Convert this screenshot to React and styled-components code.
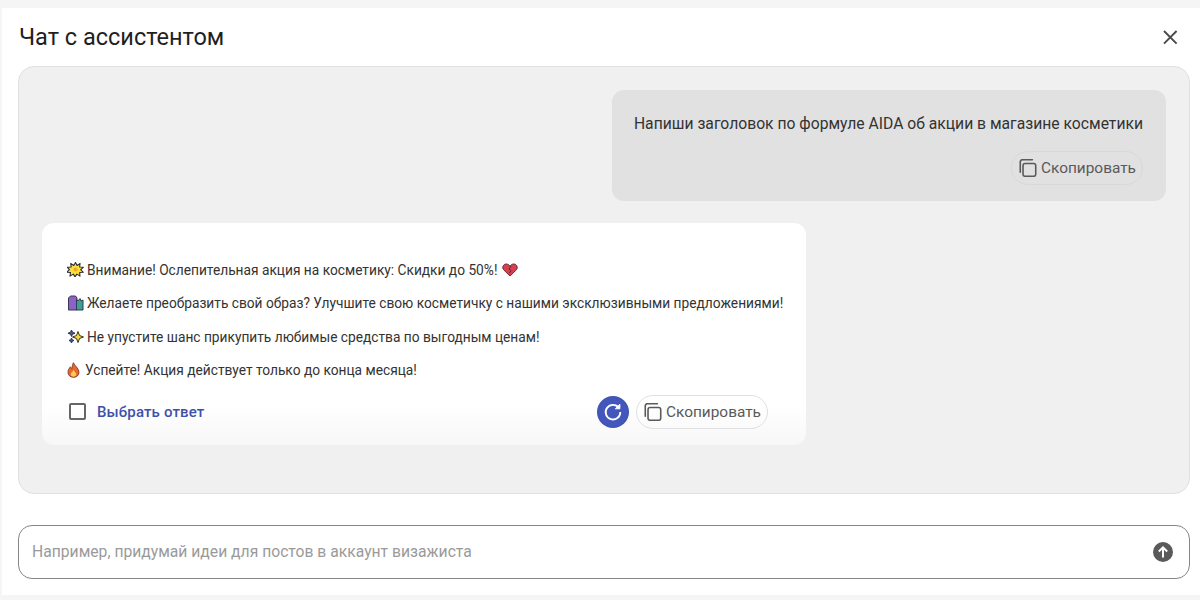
import React from 'react'
import styled, { createGlobalStyle } from 'styled-components'

const GlobalStyle = createGlobalStyle`
    html, body {
        margin: 0;
        padding: 0;
        background: #f5f5f5;
        font-family: Roboto, "Liberation Sans", sans-serif;
    }
`

const Page = styled.div`
    box-sizing: border-box;
    width: 1200px;
    height: 600px;
    padding: 8px 0 5px 2px;
    overflow: hidden;
`

const Dialog = styled.div`
    box-sizing: border-box;
    height: 100%;
    background: #fff;
    padding: 0 10px 16px 16px;
    display: flex;
    flex-direction: column;
`

const Header = styled.div`
    height: 58px;
    display: flex;
    align-items: center;
    justify-content: space-between;
    padding: 0 10px 0 1px;
`

const Title = styled.h2`
    margin: 0;
    font-size: 23.5px;
    font-weight: 400;
    color: #1f1f1f;
`

const CloseButton = styled.button`
    border: 0;
    padding: 0;
    background: none;
    display: flex;
    color: #4a4a4a;
`

const ChatArea = styled.div`
    box-sizing: border-box;
    height: 429px;
    background: #f0f0f0;
    border: 1px solid #e0e0e0;
    border-radius: 16px;
    padding: 23px 23px 0;
    display: flex;
    flex-direction: column;
    gap: 22px;
`

const UserBubble = styled.div`
    box-sizing: border-box;
    align-self: flex-end;
    width: 554px;
    height: 111px;
    padding: 23px 23px 0;
    background: #e1e1e1;
    border-radius: 12px;
    display: flex;
    flex-direction: column;
    align-items: flex-end;
    gap: 17px;
`

const UserText = styled.div`
    font-size: 15.7px;
    line-height: 21px;
    color: #333;
    white-space: nowrap;
`

const AnswerCard = styled.div`
    box-sizing: border-box;
    width: 764px;
    height: 222px;
    padding: 30px 23px 0 25px;
    background: linear-gradient(#fff 0, #fff 82%, #f7f7f7 100%);
    border-radius: 12px;
`

const AnswerLine = styled.div`
    height: 33.5px;
    display: flex;
    align-items: center;
    gap: ${p => p.$gap || 3}px;
    font-size: 13.74px;
    color: #333;
    white-space: nowrap;

    svg {
        flex-shrink: 0;
    }
`

const HeartMark = styled.span`
    display: flex;
    margin-left: 2px;
`

const AnswerFooter = styled.div`
    margin-top: 8px;
    padding: 0 15px 0 2px;
    display: flex;
    align-items: center;
`

const Checkbox = styled.span`
    box-sizing: border-box;
    width: 17px;
    height: 17px;
    border: 2px solid #666;
    border-radius: 2px;
    margin-right: 11px;
`

const SelectLabel = styled.span`
    font-size: 15px;
    font-weight: 500;
    letter-spacing: 0.15px;
    color: #3f50ab;
`

const Actions = styled.div`
    margin-left: auto;
    display: flex;
    align-items: center;
    gap: 7px;
`

const RefreshButton = styled.button`
    width: 32px;
    height: 32px;
    padding: 0;
    border: 0;
    border-radius: 50%;
    background: radial-gradient(circle, #4356bb 60%, #39499f 100%);
    display: flex;
    align-items: center;
    justify-content: center;
`

const CopyButton = styled.button`
    box-sizing: border-box;
    width: 132px;
    height: 34px;
    padding: 0 6px 0 7px;
    border: 1px solid ${p => p.$onGrey ? '#d8d8d8' : '#e0e0e0'};
    border-radius: 17px;
    background: transparent;
    display: flex;
    align-items: center;
    gap: 4px;
    font-family: inherit;
    font-size: 15.4px;
    color: #5a5a5a;
    white-space: nowrap;
`

const InputBox = styled.div`
    box-sizing: border-box;
    height: 54px;
    margin-top: 31px;
    border: 1px solid #858585;
    border-radius: 14px;
    padding: 0 16px 0 13px;
    display: flex;
    align-items: center;
    justify-content: space-between;
`

const Placeholder = styled.span`
    font-size: 15.7px;
    line-height: 20px;
    margin-top: -1px;
    color: #9a9a9a;
`

const CopyIcon = () => (
    <svg width="18" height="18" viewBox="2 1.500 17 17" fill="none" stroke="currentColor" strokeWidth="1.500">
        <rect x="5.800" y="5.800" width="12" height="12" rx="2" />
        <path d="M3.200 14V4.200a2 2 0 0 1 2-2h9.400" strokeLinecap="round" />
    </svg>
)

const BoomIcon = () => (
    <svg width="17" height="15" viewBox="0 0 17 15">
        <path d="M8.500 0.500l1.600 3 3-2-0.500 3.500 3.700 0.300-2.600 2.400 2.600 2.600-3.700 0.200 0.400 3.600-3.200-2-1.800 2.800-1.700-2.800-3.300 2 0.500-3.600-3.700-0.200 2.600-2.600L0.500 5.300l3.700-0.300-0.500-3.500 3.100 2z" fill="#f7e03c" stroke="#2b2b35" strokeWidth="1.100" strokeLinejoin="round" />
        <circle cx="8.500" cy="7.500" r="2" fill="#f4a62a" />
    </svg>
)

const HeartIcon = () => (
    <svg width="16" height="14" viewBox="0 0 16 14">
        <path d="M8 13L1.600 6.800C-0.200 4.600 1.200 1 4.200 1 5.800 1 7.200 1.900 8 3.200 8.800 1.900 10.200 1 11.800 1c3 0 4.400 3.600 2.600 5.800z" fill="#d8404f" stroke="#6b2a35" strokeWidth="1" />
        <path d="M9 3L7 6l2 1.500L7.500 10" fill="none" stroke="#5d2a35" strokeWidth="1" />
    </svg>
)

const BagsIcon = () => (
    <svg width="17" height="16" viewBox="0 0 17 16">
        <path d="M1.500 15V3L3.500 1h5l1.500 2v12z" fill="#8a62c8" stroke="#3a3550" strokeWidth="1" />
        <path d="M9.500 15V4.500l1.500 1.500L13 3.500l1 2.500 2-1V15z" fill="#3f9d9a" stroke="#2d3f48" strokeWidth="1" />
    </svg>
)

const SparklesIcon = () => (
    <svg width="17" height="16" viewBox="0 0 17 16">
        <path d="M4.500 1l1 2.200L8 4.200 5.500 5.300 4.500 7.500 3.500 5.300 1 4.200l2.500-1zM4.500 9l.8 1.700 1.700.8-1.700.8-.8 1.700-.8-1.700-1.700-.8 1.700-.8z" fill="#4a4fa8" stroke="#2b2b3d" strokeWidth="0.900" />
        <path d="M11 2.500l1.500 4 4 1.500-4 1.500-1.500 4-1.500-4-4-1.500 4-1.500z" fill="#f6d63e" stroke="#35331f" strokeWidth="1" strokeLinejoin="round" />
    </svg>
)

const FireIcon = () => (
    <svg width="13" height="16" viewBox="0 0 13 16">
        <path d="M6.500 0.700C7 3.500 12 6 12 10.200 12 13.200 9.600 15.300 6.500 15.300S1 13.200 1 10.200C1 7.600 2.500 6.300 3.400 4.800 4 6 4.400 6.400 5 6.600 5.200 4.500 5.400 2.500 6.500 0.700z" fill="#e8682e" stroke="#7a3a28" strokeWidth="0.900" />
        <path d="M6.500 8c.4 1.500 2.700 2.200 2.700 4.200 0 1.500-1.200 2.300-2.700 2.300s-2.700-.8-2.700-2.300C3.800 10.500 6 9.800 6.500 8z" fill="#fbcf52" />
    </svg>
)

const App = () => {

    return <Page>

        <GlobalStyle />

        <Dialog>

            <Header>
                <Title>Чат с ассистентом</Title>
                <CloseButton>
                    <svg width="20" height="20" viewBox="0 0 20 20" stroke="currentColor" strokeWidth="1.900">
                        <path d="M4 4l12.600 12.600M16.600 4L4 16.600" />
                    </svg>
                </CloseButton>
            </Header>

            <ChatArea>

                <UserBubble>
                    <UserText>Напиши заголовок по формуле AIDA об акции в магазине косметики</UserText>
                    <CopyButton $onGrey><CopyIcon />Скопировать</CopyButton>
                </UserBubble>

                <AnswerCard>

                    <AnswerLine><BoomIcon />Внимание! Ослепительная акция на косметику: Скидки до 50%!<HeartMark><HeartIcon /></HeartMark></AnswerLine>
                    <AnswerLine><BagsIcon />Желаете преобразить свой образ? Улучшите свою косметичку с нашими эксклюзивными предложениями!</AnswerLine>
                    <AnswerLine><SparklesIcon />Не упустите шанс прикупить любимые средства по выгодным ценам!</AnswerLine>
                    <AnswerLine $gap={5}><FireIcon />Успейте! Акция действует только до конца месяца!</AnswerLine>

                    <AnswerFooter>
                        <Checkbox />
                        <SelectLabel>Выбрать ответ</SelectLabel>
                        <Actions>
                            <RefreshButton>
                                <svg width="22" height="22" viewBox="0 0 24 24" fill="none" stroke="#fff" strokeWidth="2">
                                    <path d="M18.500 7.500A8 8 0 1 0 20 12" />
                                    <path d="M19.500 3.500v5h-5z" fill="#fff" strokeWidth="1" />
                                </svg>
                            </RefreshButton>
                            <CopyButton><CopyIcon />Скопировать</CopyButton>
                        </Actions>
                    </AnswerFooter>

                </AnswerCard>

            </ChatArea>

            <InputBox>
                <Placeholder>Например, придумай идеи для постов в аккаунт визажиста</Placeholder>
                <svg width="20" height="20" viewBox="0 0 20 20">
                    <circle cx="10" cy="10" r="10" fill="#5a5a5a" />
                    <path d="M10 15.500V5.500M5.800 9.500L10 5.300l4.200 4.200" fill="none" stroke="#fff" strokeWidth="2" />
                </svg>
            </InputBox>

        </Dialog>

    </Page>

}

export default App
